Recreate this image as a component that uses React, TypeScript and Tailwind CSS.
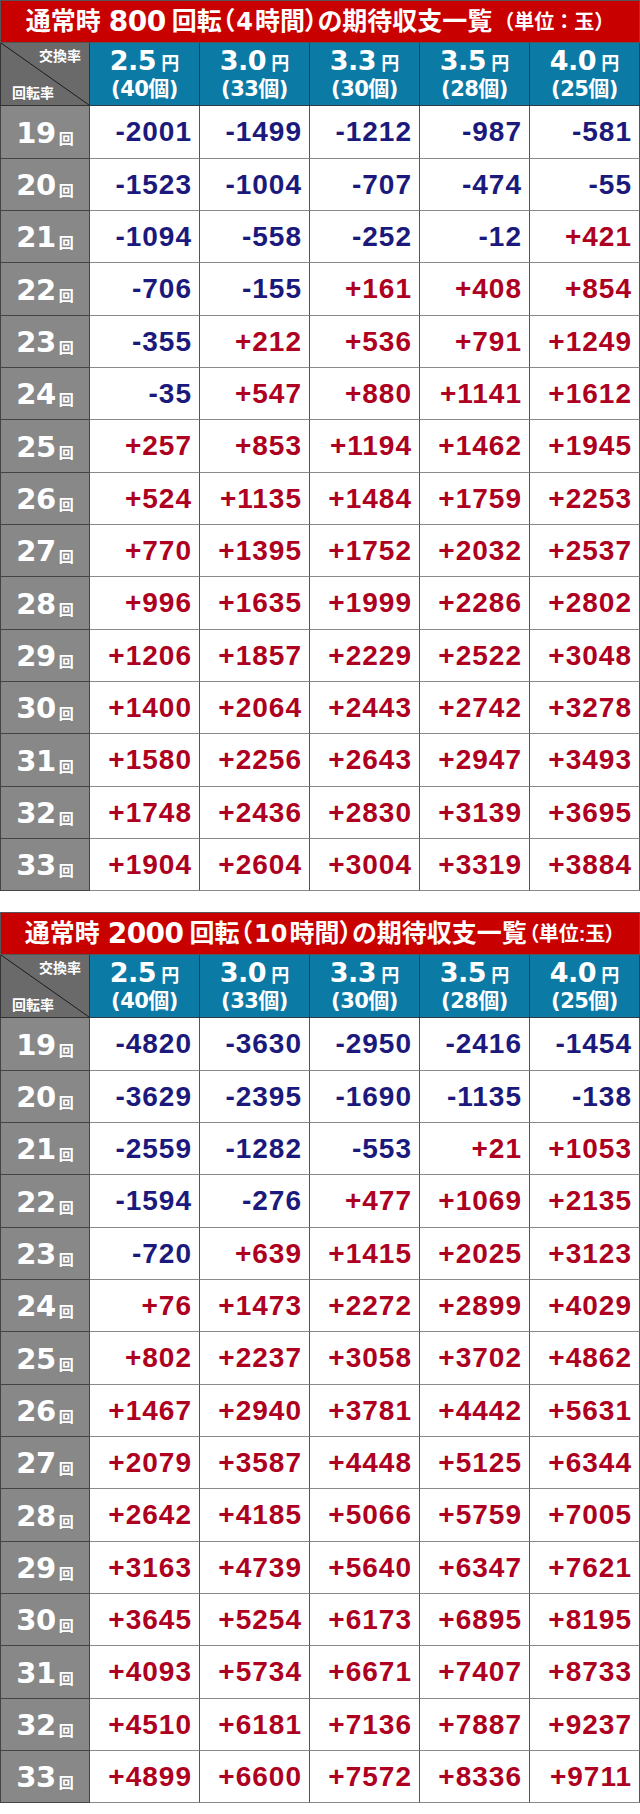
import React from 'react';

const rates = [
  { yen: '2.5', balls: '40' },
  { yen: '3.0', balls: '33' },
  { yen: '3.3', balls: '30' },
  { yen: '3.5', balls: '28' },
  { yen: '4.0', balls: '25' },
];

const spins = [19, 20, 21, 22, 23, 24, 25, 26, 27, 28, 29, 30, 31, 32, 33];

const table800 = [
  [-2001, -1499, -1212, -987, -581],
  [-1523, -1004, -707, -474, -55],
  [-1094, -558, -252, -12, 421],
  [-706, -155, 161, 408, 854],
  [-355, 212, 536, 791, 1249],
  [-35, 547, 880, 1141, 1612],
  [257, 853, 1194, 1462, 1945],
  [524, 1135, 1484, 1759, 2253],
  [770, 1395, 1752, 2032, 2537],
  [996, 1635, 1999, 2286, 2802],
  [1206, 1857, 2229, 2522, 3048],
  [1400, 2064, 2443, 2742, 3278],
  [1580, 2256, 2643, 2947, 3493],
  [1748, 2436, 2830, 3139, 3695],
  [1904, 2604, 3004, 3319, 3884],
];

const table2000 = [
  [-4820, -3630, -2950, -2416, -1454],
  [-3629, -2395, -1690, -1135, -138],
  [-2559, -1282, -553, 21, 1053],
  [-1594, -276, 477, 1069, 2135],
  [-720, 639, 1415, 2025, 3123],
  [76, 1473, 2272, 2899, 4029],
  [802, 2237, 3058, 3702, 4862],
  [1467, 2940, 3781, 4442, 5631],
  [2079, 3587, 4448, 5125, 6344],
  [2642, 4185, 5066, 5759, 7005],
  [3163, 4739, 5640, 6347, 7621],
  [3645, 5254, 6173, 6895, 8195],
  [4093, 5734, 6671, 7407, 8733],
  [4510, 6181, 7136, 7887, 9237],
  [4899, 6600, 7572, 8336, 9711],
];

const round = "font-['DejaVu_Sans','Noto_Sans_CJK_JP',sans-serif] font-bold";
const cjk = "font-['Liberation_Sans','Noto_Sans_CJK_JP',sans-serif] font-bold";

function Title({ spins, hours, unit }: { spins: string; hours: string; unit: React.ReactNode }) {
  return (
    <div
      className={`flex h-[43px] items-center justify-center whitespace-nowrap border border-[#555] bg-[#c90000] text-white ${cjk}`}
    >
      <span className="text-[25px]">通常時</span>
      <span className={`ml-[8px] mr-[6px] text-[28px] tracking-[-0.5px] ${round}`}>{spins}</span>
      <span className="text-[25px] [font-feature-settings:'palt']">回転（</span>
      <span className={`mx-[2px] text-[24px] ${round}`}>{hours}</span>
      <span className="text-[25px] [font-feature-settings:'palt']">時間）の期待収支一覧</span>
      <span className="ml-[2px] text-[20px]">{unit}</span>
    </div>
  );
}

function Header() {
  return (
    <div className="grid h-[63px] grid-cols-[90px_repeat(5,110px)]">
      <div className="relative border-r border-b border-l border-[#333] bg-[#6a6a6a]">
        <svg className="absolute inset-0 h-full w-full" viewBox="0 0 89 62" preserveAspectRatio="none">
          <line x1="0" y1="0" x2="89" y2="62" stroke="#1a1a1a" strokeWidth="1" />
        </svg>
        <span className={`absolute top-[6px] right-[8px] text-[14px] leading-none text-white ${cjk}`}>交換率</span>
        <span className={`absolute bottom-[5px] left-[11px] text-[14px] leading-none text-white ${cjk}`}>回転率</span>
      </div>
      {rates.map((r) => (
        <div
          key={r.yen}
          className={`flex flex-col items-center justify-center border-r border-b border-[#2b3a44] bg-[#0b7aa5] pb-[2px] text-white ${round}`}
        >
          <div className="flex items-baseline leading-none">
            <span className="text-[27px] tracking-[-0.5px]">{r.yen}</span>
            <span className={`ml-[5px] text-[18px] ${cjk}`}>円</span>
          </div>
          <div className="mt-[5px] text-[21px] leading-none tracking-[-0.5px]">
            ({r.balls}個)
          </div>
        </div>
      ))}
    </div>
  );
}

function fmt(n: number) {
  return n > 0 ? `+${n}` : `${n}`;
}

function Table({ data, spinsLabel, hours, unit }: { data: number[][]; spinsLabel: string; hours: string; unit: React.ReactNode }) {
  return (
    <div className="w-[640px]">
      <Title spins={spinsLabel} hours={hours} unit={unit} />
      <Header />
      {spins.map((s, i) => (
        <div
          key={s}
          className={`grid grid-cols-[90px_repeat(5,110px)] ${i % 3 === 0 ? 'h-[53px]' : 'h-[52px]'}`}
        >
          <div className="flex items-center justify-center border-r border-b border-l border-[#444] bg-[#888888] pt-[2px] text-white">
            <span className={`text-[29px] leading-none tracking-[-0.5px] ${round}`}>{s}</span>
            <span className={`ml-[3px] self-end pb-[12px] text-[15px] leading-none ${cjk}`}>回</span>
          </div>
          {data[i].map((v, j) => (
            <div
              key={j}
              className={`flex items-center justify-end border-r border-b border-r-[#555] border-b-[#8a8a8a] bg-white pr-[7px] font-['Liberation_Sans',sans-serif] text-[28px] font-bold tracking-[1px] ${v > 0 ? 'text-[#ae0020]' : 'text-[#1b1a7c]'}`}
            >
              {fmt(v)}
            </div>
          ))}
        </div>
      ))}
    </div>
  );
}

export default function App() {
  return (
    <div className="min-h-[1814px] w-[640px] bg-white">
      <Table data={table800} spinsLabel="800" hours="4" unit="（単位：玉）" />
      <div className="h-[21px]" />
      <Table
        data={table2000}
        spinsLabel="2000"
        hours="10"
        unit={<span className="[font-feature-settings:'palt']">（単位:玉）</span>}
      />
    </div>
  );
}
